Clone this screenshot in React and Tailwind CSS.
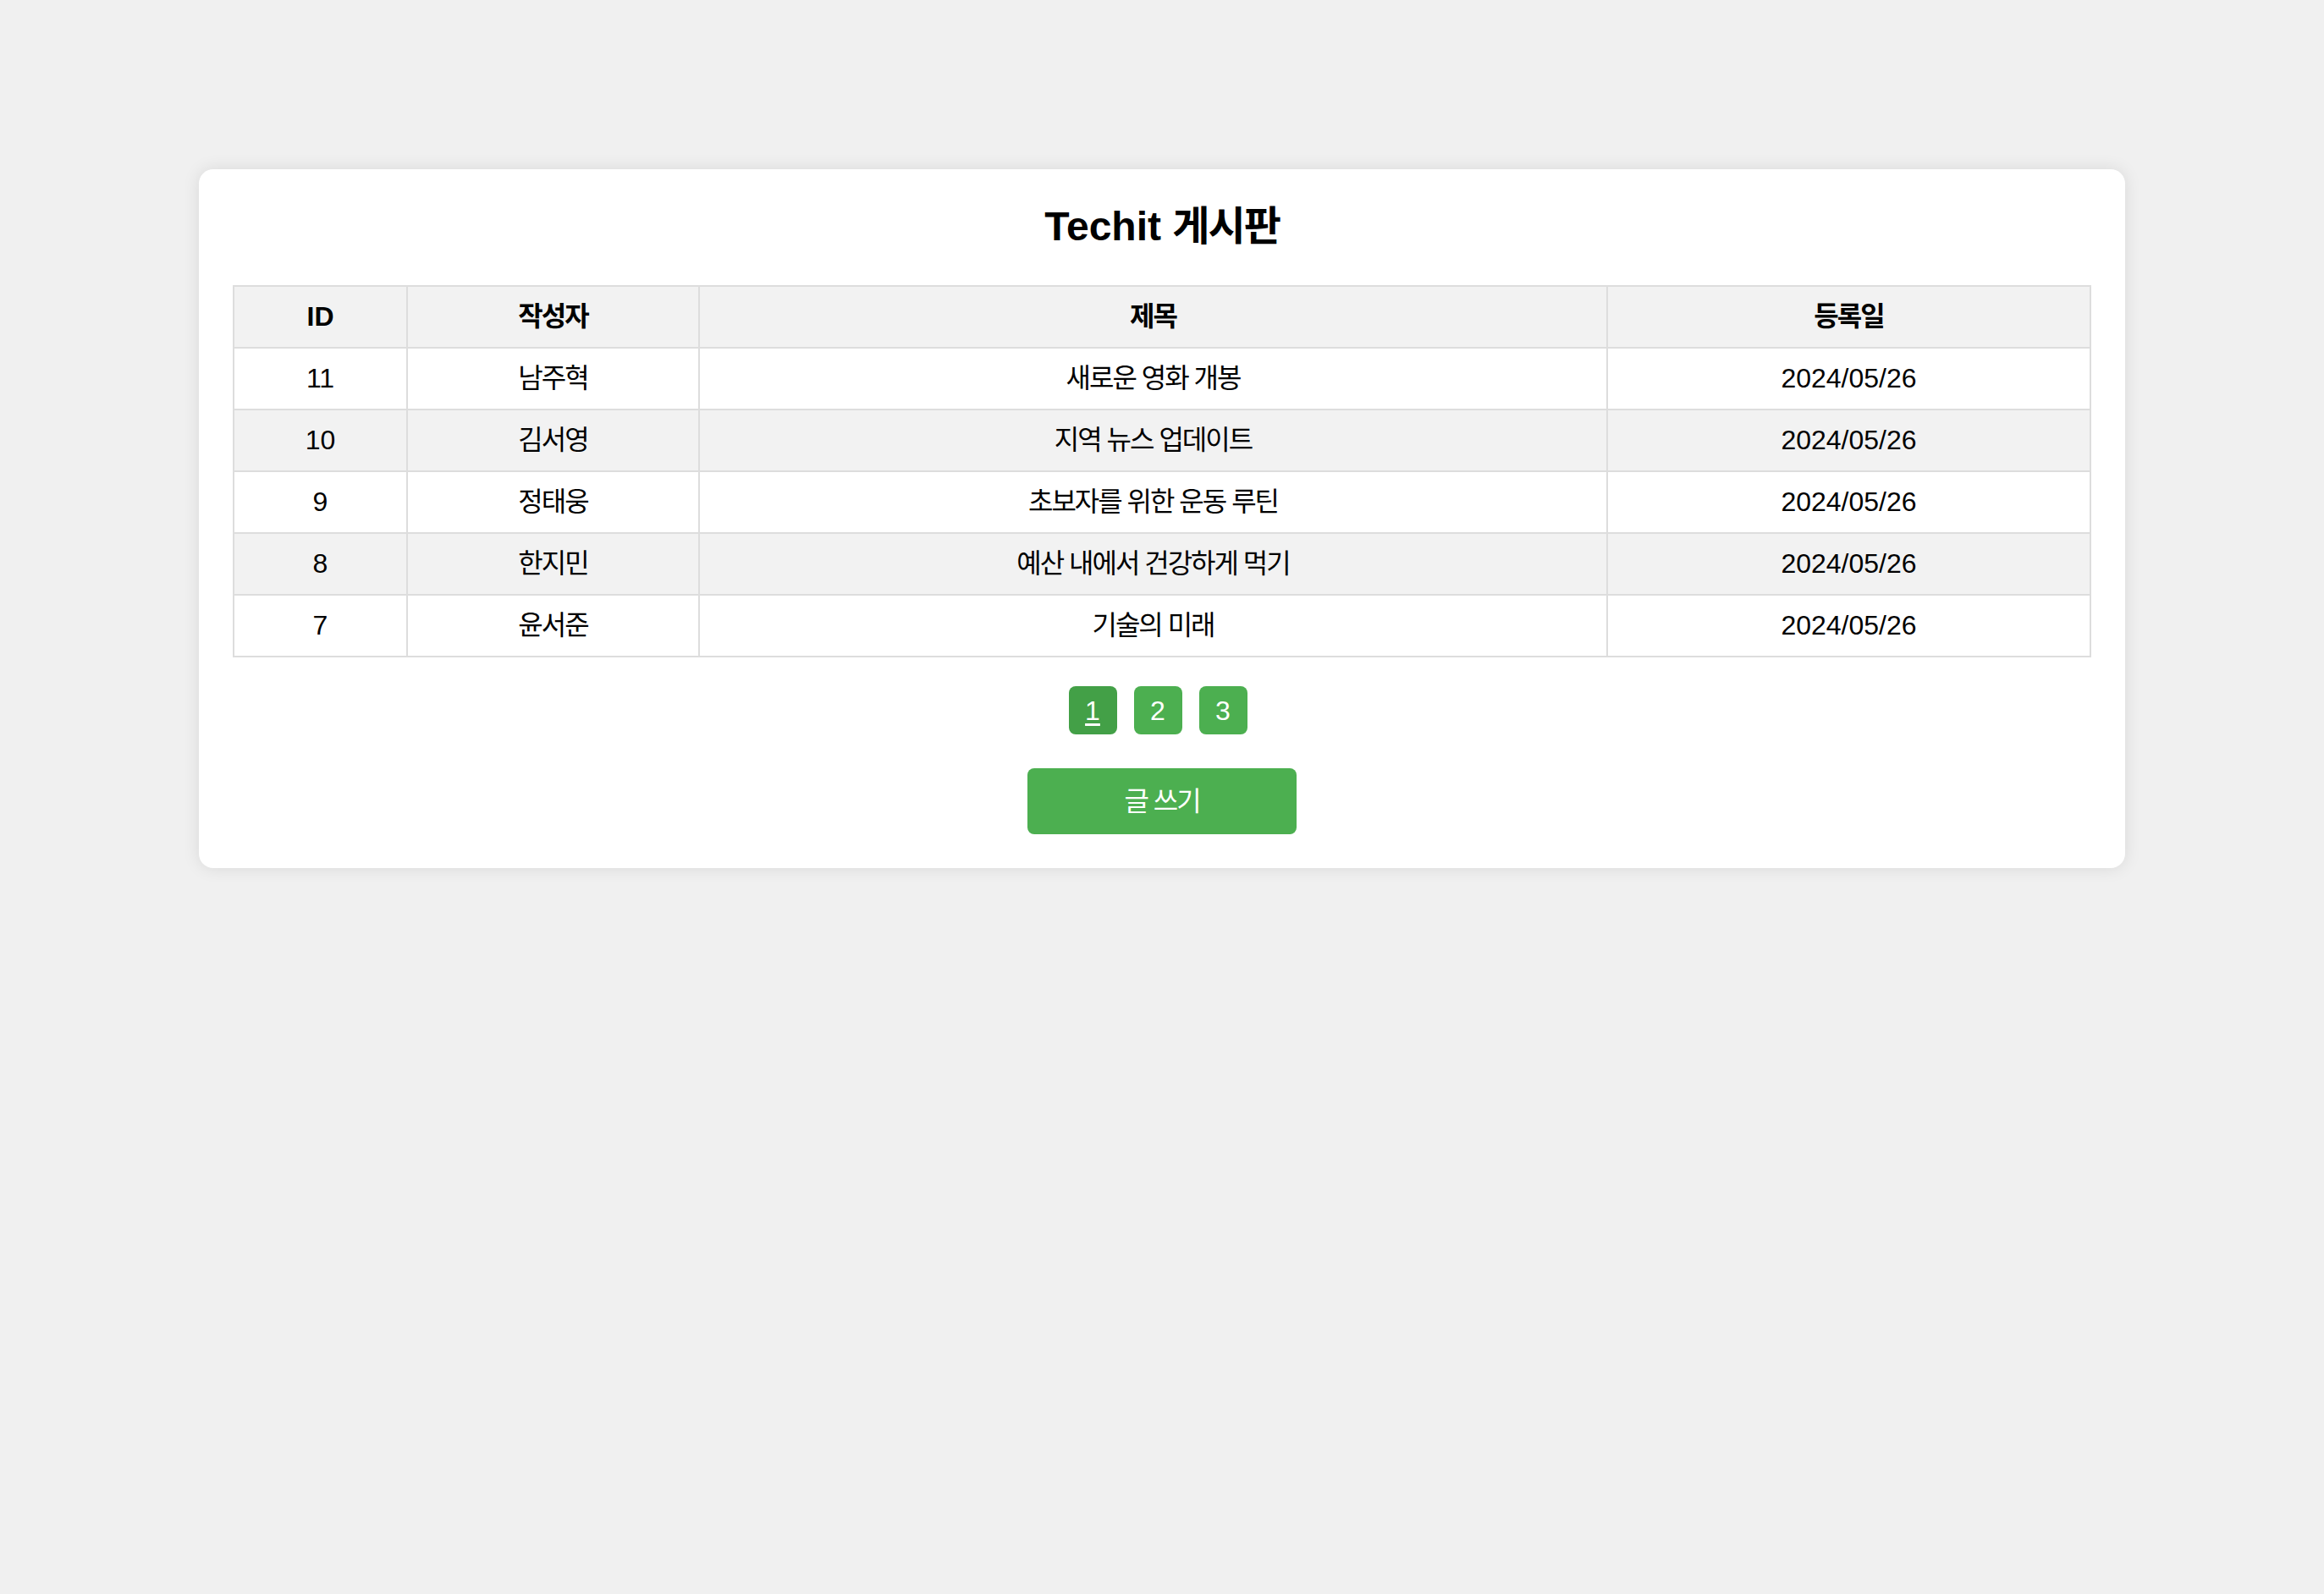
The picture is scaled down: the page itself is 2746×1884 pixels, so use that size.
const posts = [
  { id: 11, author: "남주혁", title: "새로운 영화 개봉", date: "2024/05/26" },
  { id: 10, author: "김서영", title: "지역 뉴스 업데이트", date: "2024/05/26" },
  { id: 9, author: "정태웅", title: "초보자를 위한 운동 루틴", date: "2024/05/26" },
  { id: 8, author: "한지민", title: "예산 내에서 건강하게 먹기", date: "2024/05/26" },
  { id: 7, author: "윤서준", title: "기술의 미래", date: "2024/05/26" },
];

function App() {
  return (
    <div
      className="min-h-screen bg-[#f0f0f0] pt-[200px] pb-10 text-black"
      style={{ fontFamily: '"Liberation Sans", Arial, "Noto Sans CJK KR", sans-serif' }}
    >
      <div className="mx-[235px] bg-white rounded-[17px] shadow-[0_0_20px_rgba(0,0,0,0.1)] p-10">
        <h1 className="text-center text-[48px] leading-[55px] font-bold mb-[42px]">
          Techit <span className="tracking-[-2px]">게시판</span>
        </h1>

        <table className="w-full table-fixed border-collapse text-[32px] leading-[39px]">
          <thead>
            <tr className="bg-[#f2f2f2]">
              <th className="w-[205px] border-2 border-[#ddd] py-4 font-bold">ID</th>
              <th className="w-[345px] border-2 border-[#ddd] py-4 font-bold tracking-[-2px]">작성자</th>
              <th className="w-[1073px] border-2 border-[#ddd] py-4 font-bold tracking-[-2px]">제목</th>
              <th className="border-2 border-[#ddd] py-4 font-bold tracking-[-2px]">등록일</th>
            </tr>
          </thead>
          <tbody>
            {posts.map((p, i) => (
              <tr key={p.id} className={i % 2 === 1 ? "bg-[#f2f2f2]" : "bg-white"}>
                <td className="border-2 border-[#ddd] py-4 text-center">{p.id}</td>
                <td className="border-2 border-[#ddd] py-4 text-center tracking-[-2px]">{p.author}</td>
                <td className="border-2 border-[#ddd] py-4 text-center tracking-[-2px]">{p.title}</td>
                <td className="border-2 border-[#ddd] py-4 text-center">{p.date}</td>
              </tr>
            ))}
          </tbody>
        </table>

        <div className="flex justify-center gap-5 mt-[34px] pr-[10px]">
          {[1, 2, 3].map((n) => (
            <a
              key={n}
              href="#"
              className={
                "w-[57px] h-[57px] flex items-center justify-center rounded-lg text-white text-[32px] " +
                (n === 1 ? "bg-[#43a047] underline underline-offset-4" : "bg-[#4caf50] no-underline")
              }
            >
              {n}
            </a>
          ))}
        </div>

        <div className="flex justify-center mt-10">
          <button className="w-[318px] h-[78px] rounded-lg bg-[#4caf50] text-white text-[32px] tracking-[-2px]">
            글 쓰기
          </button>
        </div>
      </div>
    </div>
  );
}

export default App;
